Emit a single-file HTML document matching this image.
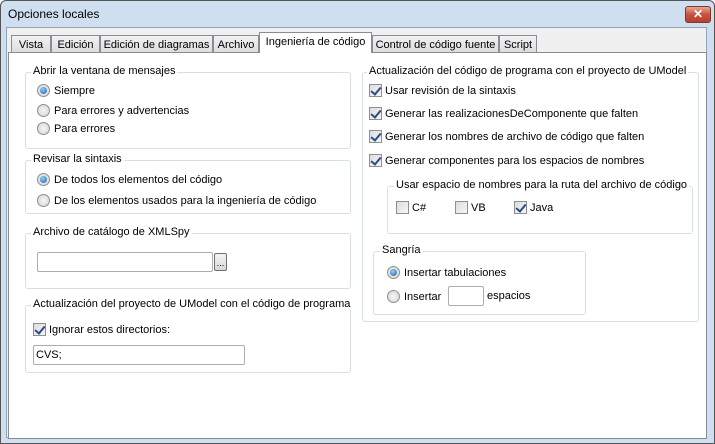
<!DOCTYPE html>
<html><head><style>
*{box-sizing:border-box}
body{margin:0;width:715px;height:444px;overflow:hidden;font-family:"Liberation Sans",sans-serif;font-size:11px;color:#000;background:#fff}
.win{position:absolute;left:0;top:0;width:715px;height:444px;background:#cfdff0;border:1px solid #555;border-radius:6px 6px 0 0}
.title{position:absolute;left:7px;top:6px;font-size:12px}
.close{position:absolute;left:684px;top:5px;width:26px;height:17px;border:1px solid #7a3a30;border-radius:3px;background:linear-gradient(#e8a89a,#c7523d 50%,#b8402c);color:#fff;font-weight:bold;text-align:center;line-height:15px;font-size:12px}
.client{position:absolute;left:6px;top:27px;width:701px;height:411px;background:#f0f0f0;border:1px solid #8fa3ba}
.panel{position:absolute;left:8px;top:52px;width:699px;height:387px;background:#fff;border:1px solid #898c95}
.tab{position:absolute;top:35px;height:18px;background:linear-gradient(#f2f2f2,#dcdcdc);border:1px solid #898c95;border-bottom:none;padding:3px 0 0 0;text-align:center;white-space:nowrap}
.tab.sel{top:32px;height:21px;background:#fff;z-index:2;padding-top:3px}
.gb{position:absolute;border:1px solid #d5dfe5;border-radius:3px}
.gl{position:absolute;background:#fff;padding:0 2px;white-space:nowrap}
.it{position:absolute;white-space:nowrap}
.rd{display:inline-block;width:13px;height:13px;border-radius:50%;border:1px solid #8e8f8f;background:radial-gradient(#f4f4f4,#d4d4d4);vertical-align:-3px;margin-right:4px;position:relative}
.rd.on::after{content:"";position:absolute;left:2px;top:2px;width:7px;height:7px;border-radius:50%;background:radial-gradient(circle at 40% 35%,#8fd0ff,#1c5a9e)}
.cb{display:inline-block;width:13px;height:13px;border:1px solid #8e8f8f;background:linear-gradient(135deg,#dcdcdc,#f6f6f6);vertical-align:-3px;margin-right:3px;position:relative}
.cb.on::after{content:"";position:absolute;left:3px;top:0px;width:4px;height:8px;border:solid #2a4a8a;border-width:0 2px 2px 0;transform:rotate(40deg)}
.inp{position:absolute;border:1px solid #abadb3;border-radius:2px;background:#fff}
</style></head><body>
<div class="win">
<div class="title">Opciones locales</div>
<div class="close">✕</div>
</div>
<div class="client"></div>
<div class="tab" style="left:11px;width:40px">Vista</div>
<div class="tab" style="left:51px;width:49px">Edición</div>
<div class="tab" style="left:100px;width:113px">Edición de diagramas</div>
<div class="tab" style="left:213px;width:46px">Archivo</div>
<div class="tab sel" style="left:259px;width:113px">Ingeniería de código</div>
<div class="tab" style="left:372px;width:127px">Control de código fuente</div>
<div class="tab" style="left:499px;width:38px">Script</div>
<div class="panel"></div>

<div class="gb" style="left:25px;top:72px;width:326px;height:77px"></div>
<div class="gl" style="left:31px;top:65px">Abrir la ventana de mensajes</div>
<div class="it" style="left:37px;top:84px"><span class="rd on"></span>Siempre</div>
<div class="it" style="left:37px;top:104px"><span class="rd"></span>Para errores y advertencias</div>
<div class="it" style="left:37px;top:122px"><span class="rd"></span>Para errores</div>

<div class="gb" style="left:25px;top:160px;width:326px;height:54px"></div>
<div class="gl" style="left:31px;top:153px">Revisar la sintaxis</div>
<div class="it" style="left:37px;top:173px"><span class="rd on"></span>De todos los elementos del código</div>
<div class="it" style="left:37px;top:194px"><span class="rd"></span>De los elementos usados para la ingeniería de código</div>

<div class="gb" style="left:25px;top:233px;width:326px;height:56px"></div>
<div class="gl" style="left:31px;top:226px">Archivo de catálogo de XMLSpy</div>
<div class="inp" style="left:37px;top:252px;width:176px;height:20px"></div>
<div class="inp" style="left:214px;top:253px;width:13px;height:18px;background:linear-gradient(#f4f4f4,#d8d8d8);border-color:#707070;font-size:9px;text-align:center;line-height:18px">...</div>

<div class="gb" style="left:25px;top:305px;width:326px;height:68px"></div>
<div class="gl" style="left:31px;top:298px">Actualización del proyecto de UModel con el código de programa</div>
<div class="it" style="left:33px;top:323px"><span class="cb on"></span>Ignorar estos directorios:</div>
<div class="inp" style="left:33px;top:345px;width:212px;height:20px;padding:3px 2px;color:#000">CVS;</div>

<div class="gb" style="left:362px;top:72px;width:337px;height:250px"></div>
<div class="gl" style="left:367px;top:65px">Actualización del código de programa con el proyecto de UModel</div>
<div class="it" style="left:369px;top:84px"><span class="cb on"></span>Usar revisión de la sintaxis</div>
<div class="it" style="left:369px;top:107px"><span class="cb on"></span>Generar las realizacionesDeComponente que falten</div>
<div class="it" style="left:369px;top:130px"><span class="cb on"></span>Generar los nombres de archivo de código que falten</div>
<div class="it" style="left:369px;top:154px"><span class="cb on"></span>Generar componentes para los espacios de nombres</div>

<div class="gb" style="left:387px;top:186px;width:306px;height:48px"></div>
<div class="gl" style="left:394px;top:179px">Usar espacio de nombres para la ruta del archivo de código</div>
<div class="it" style="left:396px;top:201px"><span class="cb"></span>C#</div>
<div class="it" style="left:455px;top:201px"><span class="cb"></span>VB</div>
<div class="it" style="left:514px;top:201px"><span class="cb on"></span>Java</div>

<div class="gb" style="left:373px;top:251px;width:213px;height:64px"></div>
<div class="gl" style="left:380px;top:244px">Sangría</div>
<div class="it" style="left:387px;top:266px"><span class="rd on"></span>Insertar tabulaciones</div>
<div class="it" style="left:387px;top:290px"><span class="rd"></span>Insertar</div>
<div class="inp" style="left:448px;top:286px;width:36px;height:20px"></div>
<div class="it" style="left:487px;top:290px">espacios</div>
</body></html>
